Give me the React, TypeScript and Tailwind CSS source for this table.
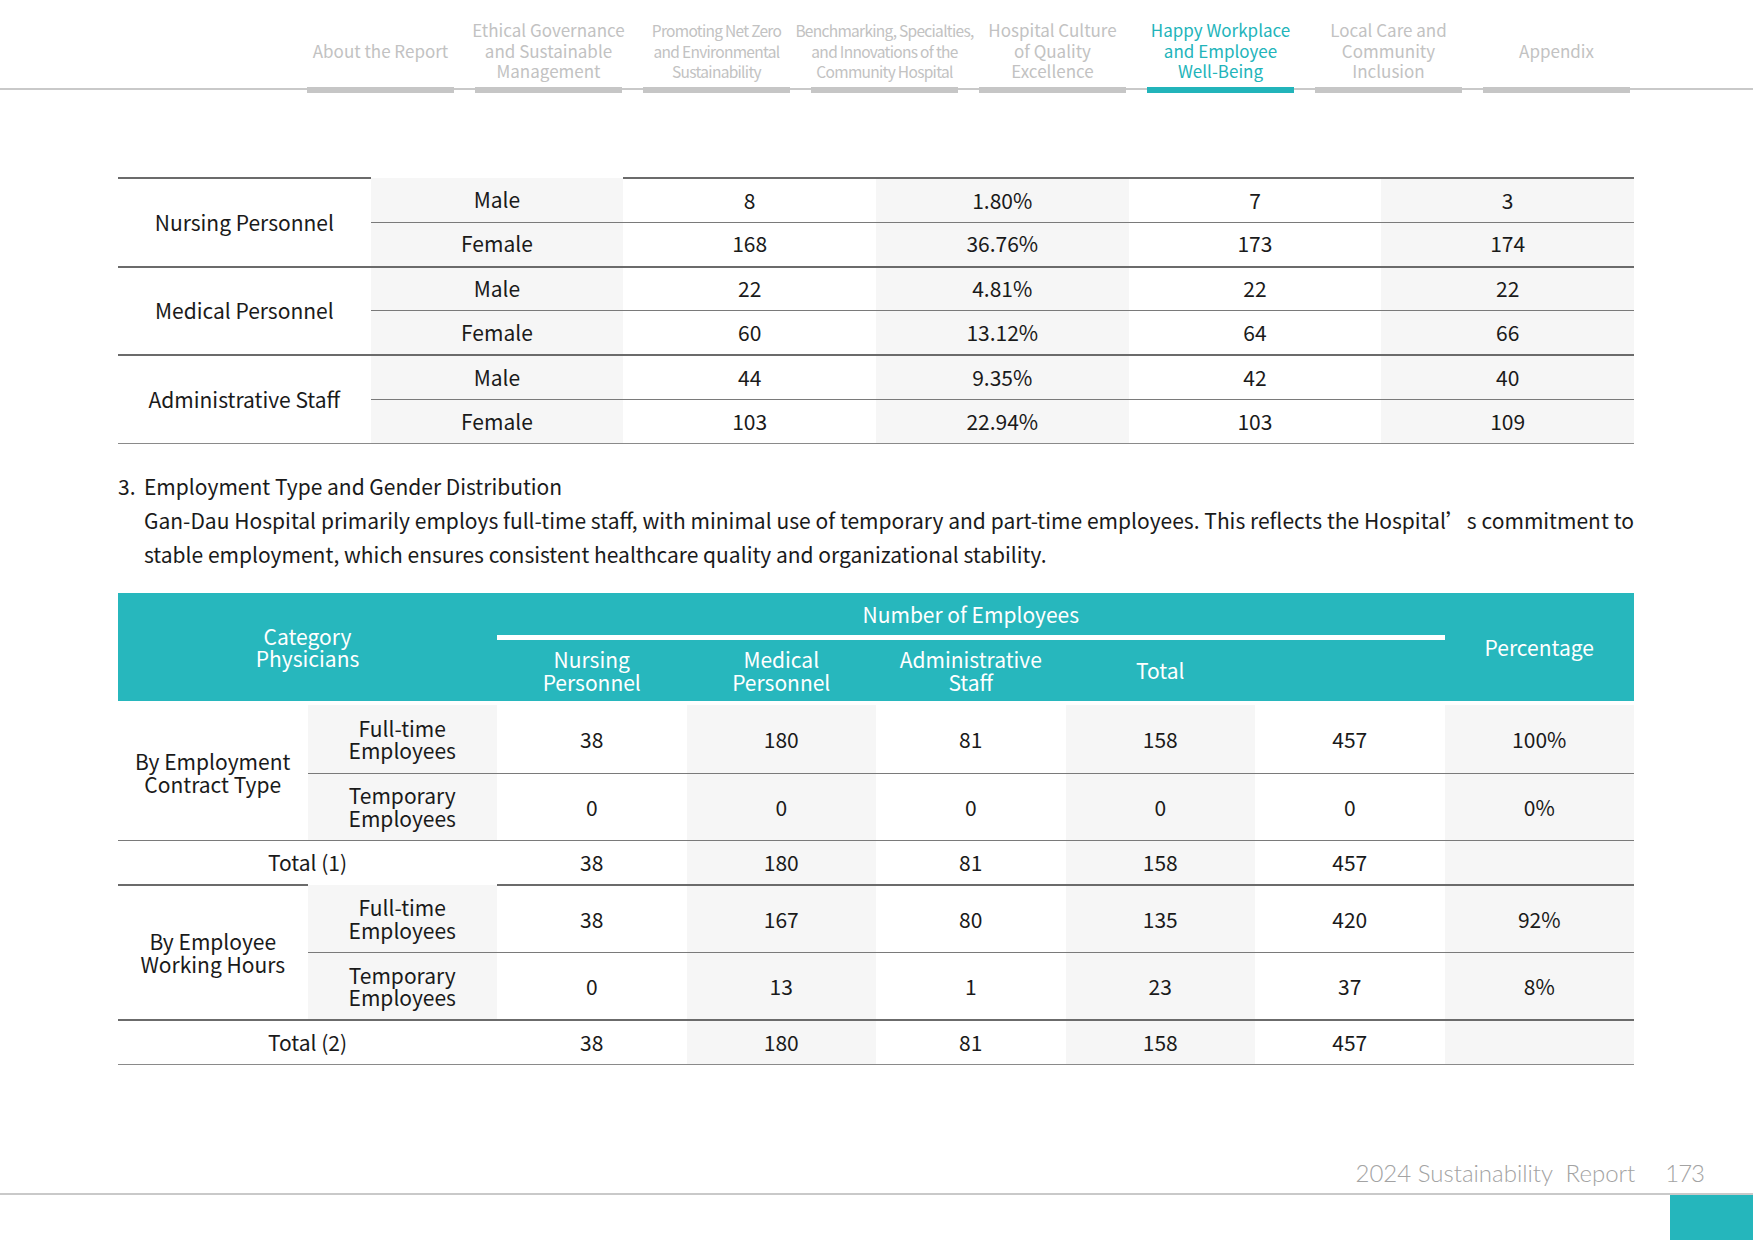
import React from "react";

const navItems = [
  { lines: ["About the Report"] },
  { lines: ["Ethical Governance", "and Sustainable", "Management"] },
  { lines: ["Promoting Net Zero", "and Environmental", "Sustainability"], narrow: true },
  { lines: ["Benchmarking, Specialties,", "and Innovations of the", "Community Hospital"], narrow: true },
  { lines: ["Hospital Culture", "of Quality", "Excellence"] },
  { lines: ["Happy Workplace", "and Employee", "Well-Being"], active: true },
  { lines: ["Local Care and", "Community", "Inclusion"] },
  { lines: ["Appendix"] },
];

const genderGroups = [
  {
    label: "Nursing Personnel",
    rows: [
      ["Male", "8", "1.80%", "7", "3"],
      ["Female", "168", "36.76%", "173", "174"],
    ],
  },
  {
    label: "Medical Personnel",
    rows: [
      ["Male", "22", "4.81%", "22", "22"],
      ["Female", "60", "13.12%", "64", "66"],
    ],
  },
  {
    label: "Administrative Staff",
    rows: [
      ["Male", "44", "9.35%", "42", "40"],
      ["Female", "103", "22.94%", "103", "109"],
    ],
  },
];

function NavBar() {
  return (
    <div className="flex gap-[21px] pl-[307px] border-b-2 border-[#c9c9c9]">
      {navItems.map((item, i) => (
        <div key={i} className="w-[147px] flex flex-col pt-[18px]">
          <div
            className={
              "h-[66px] flex flex-col items-center justify-center text-center leading-[20.5px] " +
              (item.active ? "text-[#22b4ba] " : "text-[#c2c2c2] ") +
              (item.narrow ? "text-[15.5px] tracking-[-0.7px]" : "text-[17px]")
            }
          >
            {item.lines.map((l) => (
              <span key={l} className="whitespace-nowrap">
                {l}
              </span>
            ))}
          </div>
          <div
            className={
              "mt-[3px] h-[6px] -mb-[5px] relative " + (item.active ? "bg-[#22b4ba]" : "bg-[#c6c6c6]")
            }
          />
        </div>
      ))}
    </div>
  );
}

function GenderTable() {
  return (
    <table className="w-[1516px] table-fixed border-collapse text-[21px] text-[#1a1a1a]">
      <tbody>
        {genderGroups.map((g, gi) =>
          g.rows.map((r, ri) => (
            <tr key={gi + "-" + ri} className="h-[44.3px]">
              {ri === 0 && (
                <td
                  rowSpan={2}
                  className={
                    "text-center align-middle border-t-2 border-[#6b6b6b] " +
                    (gi === 2 ? "border-b border-b-[#8a8a8a]" : "")
                  }
                >
                  {g.label}
                </td>
              )}
              {r.map((c, ci) => (
                <td
                  key={ci}
                  className={
                    "text-center align-middle " +
                    (ci % 2 === 0 ? "bg-[#f6f6f6] " : "") +
                    (ri === 0
                      ? gi === 0 && ci === 0
                        ? ""
                        : "border-t-2 border-t-[#6b6b6b] "
                      : "border-t border-t-[#7a7a7a] ") +
                    (gi === 2 && ri === 1 ? "border-b border-b-[#8a8a8a]" : "")
                  }
                >
                  {c}
                </td>
              ))}
            </tr>
          ))
        )}
      </tbody>
    </table>
  );
}

type Row = {
  group?: React.ReactNode;
  sub?: React.ReactNode;
  total?: string;
  vals: string[];
  h: string;
  line: "none" | "thin" | "thick" | "gap";
  subLine?: boolean;
  last?: boolean;
};

const empRows: Row[] = [
  {
    group: (
      <>
        By Employment
        <br />
        Contract Type
      </>
    ),
    sub: (
      <>
        Full-time
        <br />
        Employees
      </>
    ),
    vals: ["38", "180", "81", "158", "457", "100%"],
    h: "h-[70px]",
    line: "gap",
  },
  {
    sub: (
      <>
        Temporary
        <br />
        Employees
      </>
    ),
    vals: ["0", "0", "0", "0", "0", "0%"],
    h: "h-[67px]",
    line: "thin",
    subLine: true,
  },
  { total: "Total (1)", vals: ["38", "180", "81", "158", "457", ""], h: "h-[45px]", line: "thin" },
  {
    group: (
      <>
        By Employee
        <br />
        Working Hours
      </>
    ),
    sub: (
      <>
        Full-time
        <br />
        Employees
      </>
    ),
    vals: ["38", "167", "80", "135", "420", "92%"],
    h: "h-[67px]",
    line: "thick",
  },
  {
    sub: (
      <>
        Temporary
        <br />
        Employees
      </>
    ),
    vals: ["0", "13", "1", "23", "37", "8%"],
    h: "h-[68px]",
    line: "thin",
    subLine: true,
  },
  { total: "Total (2)", vals: ["38", "180", "81", "158", "457", ""], h: "h-[44px]", line: "thick", last: true },
];

function lineClass(line: Row["line"]) {
  if (line === "thick") return "border-t-2 border-t-[#6b6b6b] ";
  if (line === "thin") return "border-t border-t-[#7a7a7a] ";
  if (line === "gap") return "border-t-4 border-t-white ";
  return "";
}

function EmploymentTable() {
  return (
    <table className="w-[1516px] table-fixed border-collapse text-[21px] text-[#1a1a1a] leading-[22.5px]">
      <thead>
        <tr className="h-[44px] bg-[#27b7bd] text-white">
          <th colSpan={2} rowSpan={2} className="font-normal text-center align-middle">
            Category
            <br />
            Physicians
          </th>
          <th colSpan={5} className="font-normal text-center align-middle border-b-[5px] border-white">
            Number of Employees
          </th>
          <th rowSpan={2} className="font-normal text-center align-middle">
            Percentage
          </th>
        </tr>
        <tr className="h-[66px] bg-[#27b7bd] text-white">
          <th className="font-normal text-center align-middle">
            Nursing
            <br />
            Personnel
          </th>
          <th className="font-normal text-center align-middle">
            Medical
            <br />
            Personnel
          </th>
          <th className="font-normal text-center align-middle">
            Administrative
            <br />
            Staff
          </th>
          <th className="font-normal text-center align-middle">Total</th>
          <th />
        </tr>
      </thead>
      <tbody>
        {empRows.map((r, i) => (
          <tr key={i} className={r.h}>
            {r.group && (
              <td rowSpan={2} className={"text-center align-middle " + lineClass(r.line)}>
                {r.group}
              </td>
            )}
            {r.sub && (
              <td
                className={
                  "text-center align-middle bg-[#f6f6f6] " +
                  (r.subLine ? "border-t border-t-[#7a7a7a] " : r.line === "gap" ? lineClass("gap") : "")
                }
              >
                {r.sub}
              </td>
            )}
            {r.total && (
              <td
                colSpan={2}
                className={
                  "text-center align-middle " + lineClass(r.line) + (r.last ? "border-b border-b-[#8a8a8a]" : "")
                }
              >
                {r.total}
              </td>
            )}
            {r.vals.map((v, vi) => (
              <td
                key={vi}
                className={
                  "text-center align-middle " +
                  (vi % 2 === 1 ? "bg-[#f6f6f6] " : "") +
                  (r.subLine ? "border-t border-t-[#7a7a7a] " : lineClass(r.line)) +
                  (r.last ? "border-b border-b-[#8a8a8a]" : "")
                }
              >
                {v}
              </td>
            ))}
          </tr>
        ))}
      </tbody>
    </table>
  );
}

export default function App() {
  return (
    <div className="w-[1753px] h-[1240px] flex flex-col bg-white font-['Noto_Sans_CJK_TC','Source_Sans_Pro',sans-serif] overflow-hidden">
      <NavBar />

      <div className="w-[1516px] ml-[118px] mt-[87px]">
        <GenderTable />

        <div className="mt-[25px] text-[21px] leading-[34px] text-[#1a1a1a]">
          <div className="flex">
            <span className="w-[26px]">3.</span>
            <span>Employment Type and Gender Distribution</span>
          </div>
          <p className="pl-[26px] text-justify">
            Gan-Dau Hospital primarily employs full-time staff, with minimal use of temporary and part-time employees.
            This reflects the Hospital’s commitment to stable employment, which ensures consistent healthcare quality
            and organizational stability.
          </p>
        </div>

        <div className="mt-[22px]">
          <EmploymentTable />
        </div>
      </div>

      <div className="mt-auto">
        <div className="flex justify-end items-end pr-[49px] pb-[4px] text-[#a3a3a3] font-['Lato',sans-serif] font-light text-[24px] leading-[32px]">
          <span>2024 Sustainability&nbsp; Report</span>
          <span className="ml-[30px] tracking-[-1px]">173</span>
        </div>
        <div className="border-t-2 border-[#c9c9c9] flex justify-end">
          <div className="w-[83px] h-[45px] bg-[#25b6bc]" />
        </div>
      </div>
    </div>
  );
}
